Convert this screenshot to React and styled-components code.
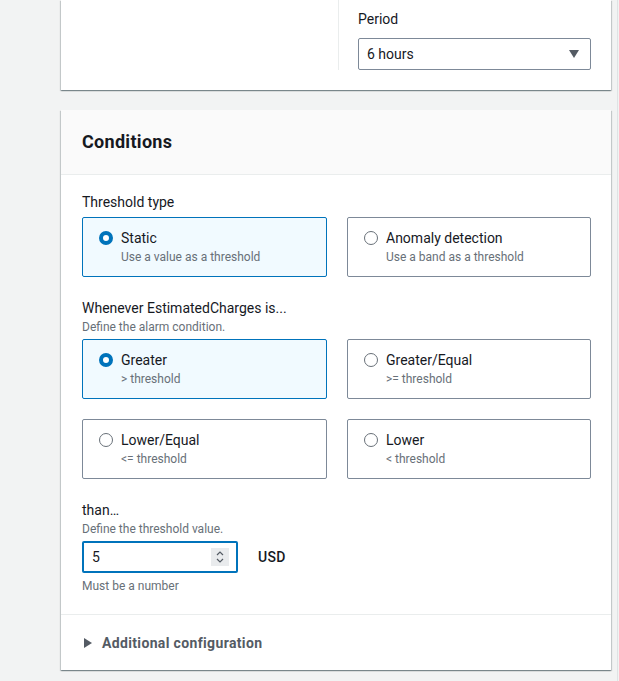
import styled, { createGlobalStyle } from "styled-components";

const GlobalStyle = createGlobalStyle`
  html, body {
    margin: 0;
    padding: 0;
    background: #f2f3f3;
  }
  body {
    font-family: Roboto, "Liberation Sans", sans-serif;
    color: #16191f;
    font-size: 14px;
    line-height: 22px;
  }
`;

const Page = styled.div`
  width: 618px;
  min-height: 681px;
  box-sizing: border-box;
  padding: 0 6px 0 61px;
  border-right: 1px solid #dfe3e4;
`;

const Card = styled.div`
  width: 550px;
  background: #ffffff;
  box-shadow: 0 1px 1px 0 rgba(0, 28, 36, 0.3), 1px 1px 1px 0 rgba(0, 28, 36, 0.15),
    -1px 1px 1px 0 rgba(0, 28, 36, 0.15);
  margin-top: ${(p) => (p.$spaced ? "20px" : "0")};
`;

const TopGrid = styled.div`
  display: grid;
  grid-template-columns: 277px 1fr;
  padding-bottom: 20px;
`;

const Column = styled.div`
  border-left: ${(p) => (p.$divided ? "1px solid #eaeded" : "none")};
  padding: 8px 20px 0 19px;
`;

const Label = styled.div`
  font-size: 14px;
  line-height: 22px;
  color: #16191f;
`;

const Description = styled.div`
  font-size: 12px;
  line-height: 16px;
  color: #687078;
`;

const Select = styled.div`
  margin-top: 8px;
  height: 32px;
  box-sizing: border-box;
  border: 1px solid #7d8998;
  border-radius: 2px;
  display: flex;
  align-items: center;
  justify-content: space-between;
  padding: 0 11px 0 8px;
`;

const Caret = styled.span`
  width: 0;
  height: 0;
  border-left: 5.5px solid transparent;
  border-right: 5.5px solid transparent;
  border-top: 8px solid #545b64;
`;

const Header = styled.div`
  background: #fafafa;
  border-bottom: 1px solid #eaeded;
  padding: 20px 21px;
  font-size: 18px;
  line-height: 24px;
  font-weight: 700;
  letter-spacing: 0.3px;
`;

const Body = styled.div`
  padding: 16px 20px 20px 21px;
  display: flex;
  flex-direction: column;
`;

const Field = styled.div`
  display: flex;
  flex-direction: column;
  margin-top: ${(p) => (p.$first ? "0" : "20px")};
`;

const TileGrid = styled.div`
  display: grid;
  grid-template-columns: 245px 244px;
  gap: 20px 20px;
  margin-top: 4px;
`;

const Tile = styled.div`
  height: 60px;
  box-sizing: border-box;
  border: 1px solid ${(p) => (p.$selected ? "#0073bb" : "#7d8998")};
  background: ${(p) => (p.$selected ? "#f1faff" : "#ffffff")};
  border-radius: 2px;
  padding: 9px 12px 0 16px;
  display: grid;
  grid-template-columns: 14px 1fr;
  column-gap: 8px;
`;

const Radio = styled.span`
  width: 14px;
  height: 14px;
  box-sizing: border-box;
  border-radius: 50%;
  margin-top: 4px;
  border: ${(p) => (p.$checked ? "4px solid #0073bb" : "1.5px solid #687078")};
  background: #ffffff;
`;

const TileText = styled.div`
  display: flex;
  flex-direction: column;
`;

const InputRow = styled.div`
  display: flex;
  align-items: center;
  gap: 20px;
  margin-top: 4px;
`;

const NumberInput = styled.div`
  width: 156px;
  height: 32px;
  box-sizing: border-box;
  border: 2px solid #0073bb;
  border-radius: 2px;
  display: flex;
  align-items: center;
  justify-content: space-between;
  padding: 0 7px 0 8px;
`;

const Spinner = styled.span`
  width: 18px;
  height: 18px;
  background: #e9ebed;
  display: flex;
  align-items: center;
  justify-content: center;
`;

const Unit = styled.span`
  font-size: 14px;
  font-weight: 500;
  letter-spacing: 0.3px;
  color: #16191f;
`;

const Hint = styled(Description)`
  margin-top: 5px;
`;

const Footer = styled.div`
  border-top: 1px solid #eaeded;
  padding: 17px 20px 16px 23px;
  display: flex;
  align-items: center;
  gap: 10px;
  line-height: 22px;
  font-weight: 700;
  letter-spacing: 0.35px;
  color: #545b64;
`;

const Arrow = styled.span`
  width: 0;
  height: 0;
  border-top: 5px solid transparent;
  border-bottom: 5px solid transparent;
  border-left: 8px solid #545b64;
`;

function Option({ title, sub, selected }) {
  return (
    <Tile $selected={selected}>
      <Radio $checked={selected} />
      <TileText>
        <Label>{title}</Label>
        <Description>{sub}</Description>
      </TileText>
    </Tile>
  );
}

export default function App() {
  return (
    <>
      <GlobalStyle />
      <Page>
        <Card>
          <TopGrid>
            <Column />
            <Column $divided>
              <Label>Period</Label>
              <Select>
                <span>6 hours</span>
                <Caret />
              </Select>
            </Column>
          </TopGrid>
        </Card>

        <Card $spaced>
          <Header>Conditions</Header>
          <Body>
            <Field $first>
              <Label>Threshold type</Label>
              <TileGrid>
                <Option title="Static" sub="Use a value as a threshold" selected />
                <Option title="Anomaly detection" sub="Use a band as a threshold" />
              </TileGrid>
            </Field>

            <Field>
              <Label>Whenever EstimatedCharges is...</Label>
              <Description>Define the alarm condition.</Description>
              <TileGrid>
                <Option title="Greater" sub="> threshold" selected />
                <Option title="Greater/Equal" sub=">= threshold" />
                <Option title="Lower/Equal" sub="<= threshold" />
                <Option title="Lower" sub="< threshold" />
              </TileGrid>
            </Field>

            <Field>
              <Label>than…</Label>
              <Description>Define the threshold value.</Description>
              <InputRow>
                <NumberInput>
                  <span>5</span>
                  <Spinner>
                    <svg width="10" height="14" viewBox="0 0 10 14" fill="none" stroke="#545b64" strokeWidth="1.2">
                      <path d="M2 5 L5 2 L8 5" />
                      <path d="M2 9 L5 12 L8 9" />
                    </svg>
                  </Spinner>
                </NumberInput>
                <Unit>USD</Unit>
              </InputRow>
              <Hint>Must be a number</Hint>
            </Field>
          </Body>
          <Footer>
            <Arrow />
            <span>Additional configuration</span>
          </Footer>
        </Card>
      </Page>
    </>
  );
}
